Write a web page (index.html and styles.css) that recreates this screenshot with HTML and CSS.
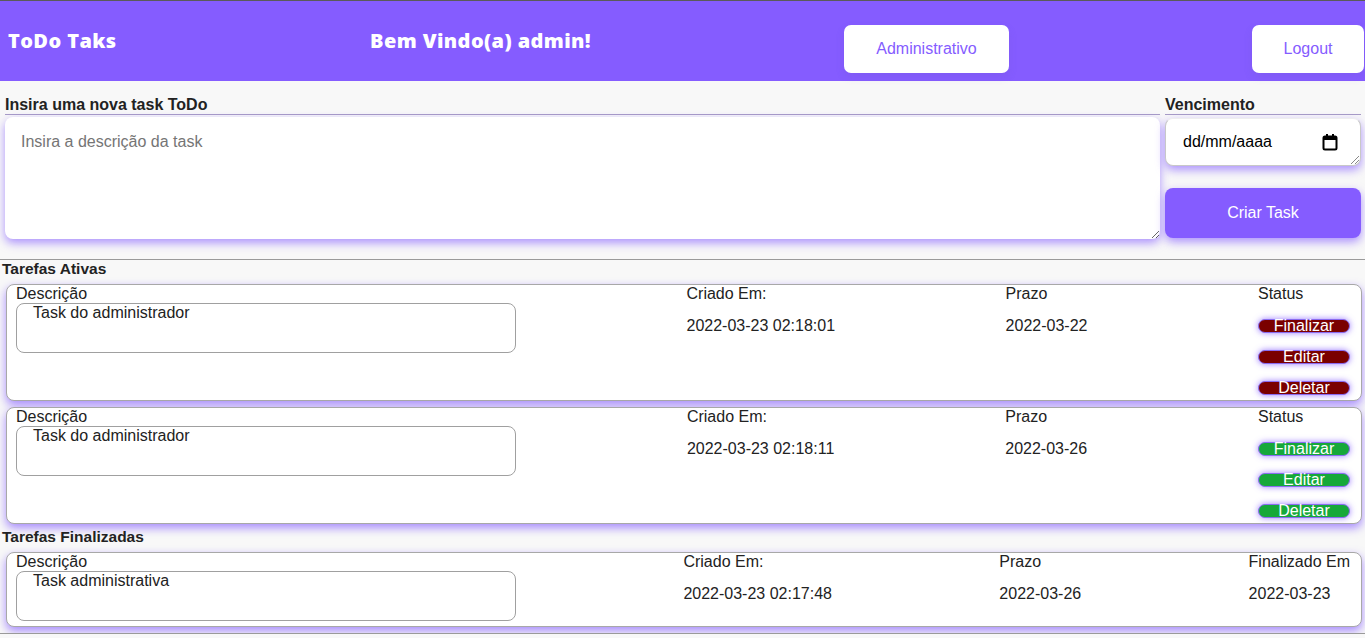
FILE: index.html
```html
<!DOCTYPE html>
<html lang="pt-BR">
<head>
<meta charset="utf-8">
<title>ToDo Taks</title>
<link rel="stylesheet" href="styles.css">
</head>
<body>
<header class="topbar">
  <h1 class="brand">ToDo Taks</h1>
  <h2 class="welcome">Bem Vindo(a) admin!</h2>
  <button class="nav-btn admin-btn">Administrativo</button>
  <button class="nav-btn logout-btn">Logout</button>
</header>
<main class="page">
  <section class="new-task">
    <div class="field desc-field">
      <label class="field-label">Insira uma nova task ToDo</label>
      <textarea class="desc-input" placeholder="Insira a descrição da task"></textarea>
    </div>
    <div class="field side-field">
      <label class="field-label">Vencimento</label>
      <div class="date-input">
        <span class="date-text">dd/mm/aaaa</span>
        <svg class="cal-icon" width="16" height="18" viewBox="0 0 16 18"><rect x="1.5" y="3.5" width="13" height="13" rx="1.5" fill="none" stroke="#000" stroke-width="2"/><rect x="1.5" y="3.5" width="13" height="3.5" fill="#000"/><rect x="4" y="1" width="2" height="3" fill="#000"/><rect x="10" y="1" width="2" height="3" fill="#000"/></svg>
        <span class="grip"></span>
      </div>
      <button class="create-btn">Criar Task</button>
    </div>
  </section>
  <div class="rule"></div>

  <section class="task-list">
    <h3 class="list-title">Tarefas Ativas</h3>
    <div class="task-card">
      <div class="col col-desc">
        <div class="col-label">Descrição</div>
        <div class="desc-box">Task do administrador</div>
      </div>
      <div class="col">
        <div class="col-label">Criado Em:</div>
        <div class="col-value">2022-03-23 02:18:01</div>
      </div>
      <div class="col">
        <div class="col-label">Prazo</div>
        <div class="col-value">2022-03-22</div>
      </div>
      <div class="col col-status">
        <div class="col-label">Status</div>
        <button class="status-btn late">Finalizar</button>
        <button class="status-btn late">Editar</button>
        <button class="status-btn late">Deletar</button>
      </div>
    </div>
    <div class="task-card">
      <div class="col col-desc">
        <div class="col-label">Descrição</div>
        <div class="desc-box">Task do administrador</div>
      </div>
      <div class="col">
        <div class="col-label">Criado Em:</div>
        <div class="col-value">2022-03-23 02:18:11</div>
      </div>
      <div class="col">
        <div class="col-label">Prazo</div>
        <div class="col-value">2022-03-26</div>
      </div>
      <div class="col col-status">
        <div class="col-label">Status</div>
        <button class="status-btn ok">Finalizar</button>
        <button class="status-btn ok">Editar</button>
        <button class="status-btn ok">Deletar</button>
      </div>
    </div>
  </section>

  <section class="task-list">
    <h3 class="list-title">Tarefas Finalizadas</h3>
    <div class="task-card">
      <div class="col col-desc">
        <div class="col-label">Descrição</div>
        <div class="desc-box">Task administrativa</div>
      </div>
      <div class="col">
        <div class="col-label">Criado Em:</div>
        <div class="col-value">2022-03-23 02:17:48</div>
      </div>
      <div class="col">
        <div class="col-label">Prazo</div>
        <div class="col-value">2022-03-26</div>
      </div>
      <div class="col">
        <div class="col-label">Finalizado Em</div>
        <div class="col-value">2022-03-23</div>
      </div>
    </div>
  </section>
  <div class="rule bottom-rule"></div>
</main>
</body>
</html>
```
FILE: styles.css
```css
* { box-sizing: border-box; }
html, body { margin: 0; padding: 0; }
body {
  background: #f8f8f8;
  border-top: 1px solid #5a5a5a;
  font-family: "Liberation Sans", Arial, sans-serif;
  font-size: 16px;
  color: #222;
  overflow: hidden;
}
.topbar {
  display: flex;
  align-items: center;
  height: 80px;
  background: #855cff;
  padding-left: 8px;
  padding-right: 1px;
}
.brand, .welcome {
  margin: 0;
  font-family: "Open Sans", "Inter", sans-serif;
  font-weight: 800;
  font-size: 20px;
  line-height: 24px;
  color: #fff;
  letter-spacing: 0.4px;
}
.brand { width: 362px; }
.welcome { width: 474px; }
.nav-btn {
  height: 48px;
  margin-top: 16px;
  border: none;
  border-radius: 7px;
  background: #fff;
  color: #855cff;
  font-family: "Liberation Sans", Arial, sans-serif;
  font-size: 16px;
  box-shadow: 0 4px 8px rgba(100, 80, 180, 0.15);
  padding: 0;
}
.admin-btn { width: 165px; }
.logout-btn { width: 112px; margin-left: auto; }

.new-task {
  display: flex;
  padding: 15px 4px 20px 5px;
}
.field { display: flex; flex-direction: column; }
.desc-field { flex: 1; }
.side-field { width: 196px; margin-left: 5px; }
.field-label {
  font-weight: 700;
  font-size: 16px;
  line-height: 18px;
  color: #222;
  border-bottom: 1px solid #a79cc6;
}
.desc-input {
  margin-top: 2px;
  height: 122px;
  border: none;
  border-radius: 8px;
  background: #fff;
  padding: 16px 16px;
  font-family: "Liberation Sans", Arial, sans-serif;
  font-size: 16px;
  box-shadow: 0 4px 10px rgba(132, 92, 255, 0.65);
  resize: vertical;
  outline: none;
}
.desc-input::placeholder { color: #757575; }
.date-input {
  position: relative;
  margin-top: 3px;
  height: 48px;
  display: flex;
  align-items: center;
  justify-content: space-between;
  padding: 0 22px 0 17px;
  background: #fff;
  border-radius: 8px;
  border: 1px solid #c8c8c8;
  border-top-color: #eee;
  box-shadow: 0 4px 10px rgba(132, 92, 255, 0.65);
  color: #000;
}
.grip {
  position: absolute;
  right: 1px;
  bottom: 1px;
  width: 8px;
  height: 8px;
  background: linear-gradient(135deg, transparent 45%, #888 45%, #888 55%, transparent 55%, transparent 70%, #888 70%, #888 80%, transparent 80%);
}
.create-btn {
  margin-top: 22px;
  height: 50px;
  border: none;
  border-radius: 8px;
  background: #855cff;
  color: #fff;
  font-family: "Liberation Sans", Arial, sans-serif;
  font-size: 16px;
  box-shadow: 0 4px 10px rgba(132, 92, 255, 0.65);
}
.rule { border-top: 1px solid #9a9a9a; }
.bottom-rule { margin-top: 6px; }

.task-list { padding: 0 3px 0 2px; margin-bottom: 4px; }
.list-title {
  margin: 0;
  font-size: 15.5px;
  line-height: 18px;
  font-weight: 700;
  color: #222;
}
.task-card {
  margin: 6px 0 0 4px;
  display: flex;
  justify-content: space-between;
  align-items: flex-start;
  background: #fff;
  border: 1px solid #a8a8a8;
  border-radius: 8px;
  padding: 0 11px 5px 9px;
  box-shadow: 0 4px 10px rgba(132, 92, 255, 0.7);
}
.col { display: flex; flex-direction: column; }
.col-label { line-height: 18px; color: #222; }
.col-value { margin-top: 14px; line-height: 18px; color: #222; }
.col-desc { width: 500px; }
.desc-box {
  height: 50px;
  border: 1px solid #a0a0a0;
  border-radius: 8px;
  padding: 0 16px;
  line-height: 18px;
  color: #222;
}
.col-status { width: 92px; align-items: flex-start; }
.status-btn {
  width: 92px;
  height: 14px;
  margin-top: 17px;
  padding: 0;
  border: 1px solid #8a6cf0;
  border-radius: 8px;
  color: #fff;
  font-family: "Liberation Sans", Arial, sans-serif;
  font-size: 16px;
  line-height: 12px;
  box-shadow: 0 0 6px rgba(132, 92, 255, 0.8);
}
.col-status .status-btn:first-of-type { margin-top: 16px; }
.status-btn.late { background: #7a0000; }
.status-btn.ok { background: #16a83a; }
```
